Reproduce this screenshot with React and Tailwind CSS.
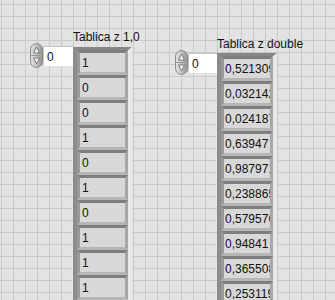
import React from "react"

const bits = ["1", "0", "0", "1", "0", "1", "0", "1", "1", "1"]
const doubles = [
  "0,521309",
  "0,032142",
  "0,024187",
  "0,63947",
  "0,987971",
  "0,238865",
  "0,579576",
  "0,94841",
  "0,365508",
  "0,253119",
]

const Spinner = () => (
  <svg width="13" height="25" viewBox="0 0 13 25" className="block">
    <defs>
      <linearGradient id="spin" x1="0" x2="1" y1="0" y2="0">
        <stop offset="0" stopColor="#e4e4e4" />
        <stop offset="0.5" stopColor="#c4c4c4" />
        <stop offset="1" stopColor="#8e8e8e" />
      </linearGradient>
    </defs>
    <rect x="0.5" y="0.5" width="12" height="24" rx="6" fill="url(#spin)" stroke="#8a8a8a" />
    <line x1="1" y1="12.5" x2="12" y2="12.5" stroke="#9a9a9a" />
    <path d="M6.5 4 L9.5 10 L3.5 10 Z" fill="#f2f2f2" stroke="#6f6f6f" strokeWidth="0.9" />
    <path d="M6.5 21 L9.5 15 L3.5 15 Z" fill="#f2f2f2" stroke="#6f6f6f" strokeWidth="0.9" />
  </svg>
)

const Cell = ({ value, pad }) => (
  <div
    className={`h-[25px] border-[3px] border-t-[#7e7e7e] border-l-[#999999] border-r-[#a7a7a7] border-b-[#b6b6b6] bg-[#d8d8d8] flex items-center ${pad} overflow-hidden whitespace-nowrap`}
  >
    {value}
  </div>
)

const ArrayColumn = ({ values, width, pad }) => (
  <div
    className={`${width} border-l-4 border-l-[#8c8c8c] border-r-4 border-r-[#e9e9e9] border-t-[3px] border-t-[#868686]`}
  >
    {values.map((v, i) => (
      <Cell key={i} value={v} pad={pad} />
    ))}
  </div>
)

const IndexControl = ({ boxWidth }) => (
  <div className="flex items-start">
    <Spinner />
    <div
      className={`${boxWidth} h-[20px] mt-[3px] bg-white border-l border-t border-[#c4c4c4] flex items-center pl-[3px]`}
    >
      0
    </div>
  </div>
)

export default function App() {
  return (
    <div
      className="w-[335px] h-[300px] overflow-hidden flex items-start bg-[#e3e3e3] bg-[linear-gradient(to_right,#c9c9c9_1px,transparent_1px),linear-gradient(to_bottom,#c9c9c9_1px,transparent_1px)] bg-[length:12px_12px] bg-[position:1px_4px] text-[12px] text-[#111] leading-[14px]"
      style={{ fontFamily: '"Liberation Sans", Arial, sans-serif' }}
    >
      {/* Tablica z 1,0 */}
      <div className="ml-[30px] flex items-start shrink-0">
        <div className="mt-[43px]">
          <IndexControl boxWidth="w-[30px]" />
        </div>
        <div className="mt-[30px] w-[59px]">
          <div className="h-[14px] whitespace-nowrap">Tablica z 1,0</div>
          <div className="mt-[3px]">
            <ArrayColumn values={bits} width="w-[59px]" pad="pl-[2px]" />
          </div>
        </div>
      </div>

      {/* Tablica z double */}
      <div className="ml-[43px] flex items-start shrink-0">
        <div className="mt-[50px]">
          <IndexControl boxWidth="w-[29px]" />
        </div>
        <div className="mt-[37px] w-[60px]">
          <div className="h-[14px] whitespace-nowrap">Tablica z double</div>
          <div className="mt-[2px]">
            <ArrayColumn values={doubles} width="w-[60px]" pad="pl-[1px]" />
          </div>
        </div>
      </div>
    </div>
  )
}
